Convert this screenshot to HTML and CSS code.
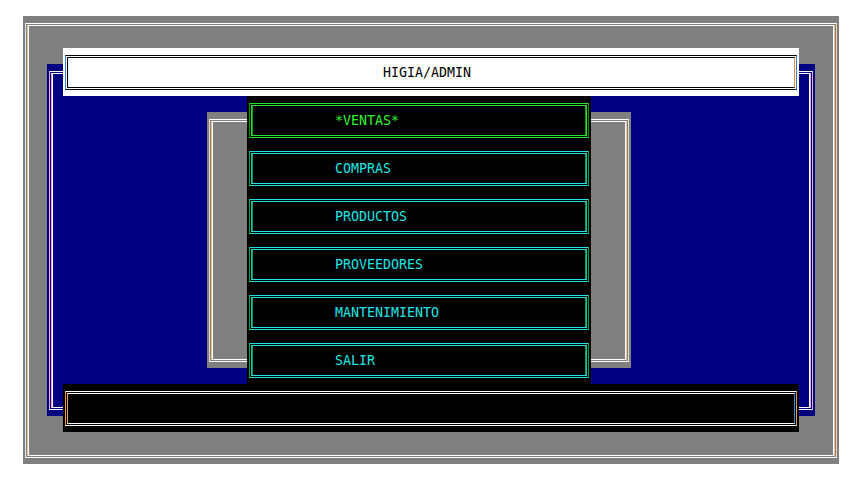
FILE: index.html
```html
<!DOCTYPE html>
<html lang="es">
<head>
  <meta charset="UTF-8">
  <title>HIGIA/ADMIN</title>
  <link rel="stylesheet" href="styles.css">
</head>
<body>
  <div class="screen">
    <div class="win desk">
      <div class="frame"><div class="frame-in"></div></div>
    </div>

    <div class="win main">
      <div class="frame"><div class="frame-in"></div></div>
    </div>

    <div class="win title">
      <div class="frame"><div class="frame-in"><span class="label">HIGIA/ADMIN</span></div></div>
    </div>

    <div class="win status">
      <div class="frame"><div class="frame-in"></div></div>
    </div>

    <div class="win back">
      <div class="frame"><div class="frame-in"></div></div>
    </div>

    <div class="menu">
      <div class="win item active">
        <div class="frame"><div class="frame-in"><span class="label">*VENTAS*</span></div></div>
      </div>
      <div class="win item">
        <div class="frame"><div class="frame-in"><span class="label">COMPRAS</span></div></div>
      </div>
      <div class="win item">
        <div class="frame"><div class="frame-in"><span class="label">PRODUCTOS</span></div></div>
      </div>
      <div class="win item">
        <div class="frame"><div class="frame-in"><span class="label">PROVEEDORES</span></div></div>
      </div>
      <div class="win item">
        <div class="frame"><div class="frame-in"><span class="label">MANTENIMIENTO</span></div></div>
      </div>
      <div class="win item">
        <div class="frame"><div class="frame-in"><span class="label">SALIR</span></div></div>
      </div>
    </div>
  </div>
</body>
</html>
```

FILE: styles.css
```css
body {
  margin: 0;
  background: #fff;
  font-family: 'DejaVu Sans Mono', 'Liberation Mono', monospace;
  font-size: 13.3px;
}

.screen {
  position: relative;
  width: 864px;
  height: 492px;
  overflow: hidden;
}

/* every window: double line border drawn in its outer cells */
.win {
  position: absolute;
  display: flex;
  box-sizing: border-box;
  padding: 7px 2px 6px;
}

.frame {
  flex: 1;
  display: flex;
  padding: 1px;
  border: 1px solid #fff;
}

.frame-in {
  flex: 1;
  display: flex;
  align-items: center;
  border: 1px solid #fff;
  line-height: 16px;
}

/* desktop (gray) */
.desk {
  left: 23px;
  top: 16px;
  width: 816px;
  height: 448px;
  background: #808080;
}

.desk .frame {
  border-left-color: #dfe6f2;
  border-right-color: #f2d2b4;
}

.desk .frame-in,
.back .frame-in {
  border-left-color: #f4c08e;
  border-right-color: #f4c08e;
  box-shadow: inset 1px 0 0 #fff, inset -1px 0 0 #fff;
}

/* main blue window */
.main {
  left: 47px;
  top: 64px;
  width: 768px;
  height: 352px;
  background: #000080;
}

.main .frame {
  border-left-color: #c9b4e6;
  border-right-color: #c9b4e6;
}

.main .frame-in {
  border-left-color: #f4a4b0;
  border-right-color: #f4a4b0;
  box-shadow: inset 1px 0 0 #fff, inset -1px 0 0 #fff;
}

/* title bar */
.title {
  left: 63px;
  top: 48px;
  width: 736px;
  height: 48px;
  background: #fff;
}

.title .frame {
  border-color: #000;
  border-left-color: #2d80d2;
  border-right-color: #2d80d2;
}

.title .frame-in {
  border-color: #000;
  border-right-color: #e08a3a;
  justify-content: center;
  padding-right: 8px;
  color: #000;
}

/* status bar */
.status {
  left: 63px;
  top: 384px;
  width: 736px;
  height: 48px;
  background: #000;
}

.status .frame {
  border-left-color: #e8983e;
  border-right-color: #e8983e;
}

.status .frame-in {
  border-left-color: #f0a050;
  border-right-color: #3a86d0;
}

/* gray window behind the menu */
.back {
  left: 207px;
  top: 112px;
  width: 424px;
  height: 256px;
  background: #808080;
}

.back .frame {
  border-left-color: #e6dcd2;
  border-right-color: #e6dcd2;
}

/* menu column */
.menu {
  position: absolute;
  left: 247px;
  top: 96px;
  width: 344px;
  height: 288px;
  display: flex;
  flex-direction: column;
  background: #000;
}

.menu .item {
  position: static;
  height: 48px;
}

.item .frame {
  border-color: #22e0e0;
  border-left-color: #00a050;
  border-right-color: #00a050;
}

.item .frame-in {
  border-color: #22e0e0;
  border-left-color: #10c8a0;
  border-right-color: #10c8a0;
  box-shadow: inset 1px 0 0 #0a9a60, inset -1px 0 0 #0a9a60;
  padding-left: 83px;
  color: #1ee4e4;
}

.item.active .frame {
  border-color: #26e026;
  border-left-color: #009000;
  border-right-color: #009000;
}

.item.active .frame-in {
  border-color: #26e026;
  box-shadow: inset 1px 0 0 #0aa00a, inset -1px 0 0 #0aa00a;
  color: #30f430;
}
```
